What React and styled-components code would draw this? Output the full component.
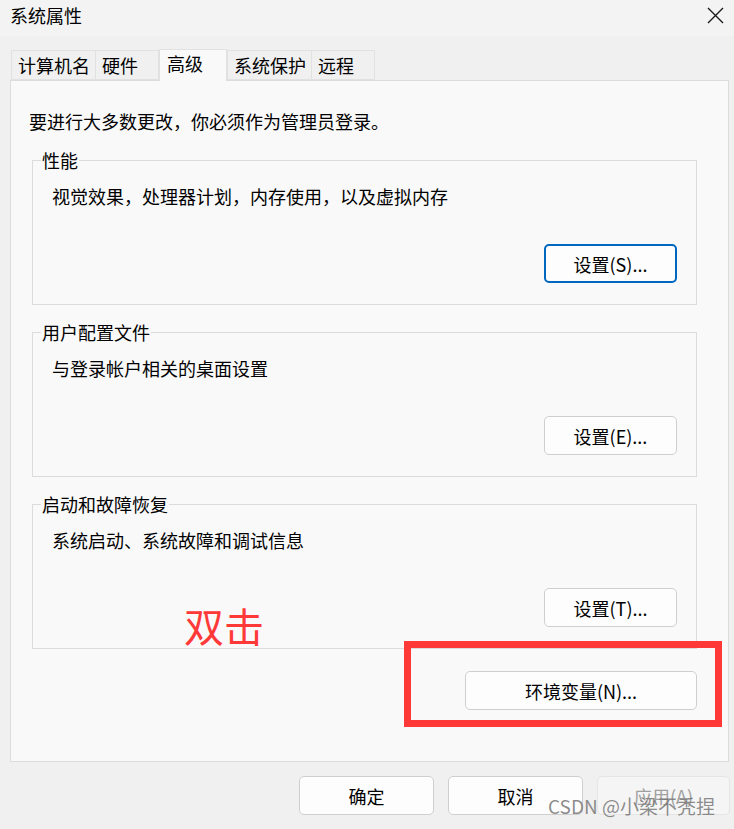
import React from 'react';
import styled, { createGlobalStyle } from 'styled-components';

const GlobalStyle = createGlobalStyle`
  html, body {
    margin: 0;
    padding: 0;
    background: #f0f0f0;
  }
  * {
    box-sizing: border-box;
  }
`;

const FONT = `"Microsoft YaHei UI", "Noto Sans CJK SC", "Noto Sans", sans-serif`;

const Window = styled.div`
  position: relative;
  width: 734px;
  height: 829px;
  display: flex;
  flex-direction: column;
  background: #f0f0f0;
  font-family: ${FONT};
  font-size: 18px;
  color: #000;
  overflow: hidden;
`;

const TitleBar = styled.div`
  height: 36px;
  display: flex;
  align-items: flex-start;
  justify-content: space-between;
  padding: 3px 8px 0 10px;
  background: #f3f3f3;
  font-size: 18px;
  line-height: 24px;
`;

const CloseButton = styled.div`
  width: 22px;
  height: 22px;
  display: flex;
  align-items: center;
  justify-content: center;
  margin-top: 1px;
`;

const TabRow = styled.div`
  display: flex;
  align-items: flex-end;
  height: 31px;
  margin: 13px 0 0 11px;
`;

const Tab = styled.div`
  height: ${(p) => (p.$active ? 32 : 30)}px;
  min-width: ${(p) => (p.$active ? 68 : 64)}px;
  padding: ${(p) => (p.$active ? '4px 6px 0 7px' : '0 5px 0 6px')};
  margin-bottom: ${(p) => (p.$active ? -1 : 0)}px;
  margin-left: ${(p) => (p.$active ? 1 : 0)}px;
  margin-right: ${(p) => (p.$active ? 0 : -1)}px;
  display: flex;
  align-items: ${(p) => (p.$active ? 'flex-start' : 'center')};
  background: ${(p) => (p.$active ? '#f9f9f9' : '#f0f0f0')};
  border: 1px solid #e1e1e1;
  border-bottom: ${(p) => (p.$active ? 'none' : '1px solid #e1e1e1')};
  position: relative;
  z-index: ${(p) => (p.$active ? 2 : 1)};
  line-height: 1;
`;

const Panel = styled.div`
  position: relative;
  height: 682px;
  margin: 0 5px 0 10px;
  background: #f9f9f9;
  border: 1px solid #dcdcdc;
  display: flex;
  flex-direction: column;
  padding: 28px 31px 0 21px;
`;

const Notice = styled.div`
  margin-left: -3px;
  line-height: 24px;
`;

const Groups = styled.div`
  display: flex;
  flex-direction: column;
  gap: 16px;
  margin-top: 16px;
`;

const Group = styled.fieldset`
  margin: 0;
  padding: 0 19px 20px 19px;
  height: 156px;
  border: 1px solid #dcdcdc;
  min-width: 0;
`;

const Legend = styled.legend`
  padding: 0 1px;
  margin-left: -11px;
  line-height: 22px;
  font-size: 18px;
`;

const Description = styled.div`
  margin-top: 13px;
  line-height: 24px;
`;

const GroupFooter = styled.div`
  margin-top: 36px;
  display: flex;
  justify-content: flex-end;
`;

const Button = styled.button`
  width: ${(p) => p.$width || 133}px;
  height: 39px;
  font-family: ${FONT};
  font-size: 18px;
  color: ${(p) => (p.disabled ? '#a0a0a0' : '#000')};
  background: ${(p) => (p.disabled ? '#f5f5f5' : '#fdfdfd')};
  border: ${(p) =>
    p.$focused ? '2px solid #0067c0' : p.disabled ? '1px solid #e5e5e5' : '1px solid #cfcfcf'};
  border-radius: 5px;
  padding: 0;
  cursor: default;
`;

const EnvRow = styled.div`
  display: flex;
  justify-content: flex-end;
  margin-top: 22px;
`;

const Footer = styled.div`
  display: flex;
  justify-content: flex-end;
  gap: 14px;
  padding: 14px 4px 0 0;
`;

const RedBox = styled.div`
  position: absolute;
  left: 404px;
  top: 641px;
  width: 318px;
  height: 86px;
  border: 7px solid #ff3838;
  pointer-events: none;
`;

const Annotation = styled.div`
  position: absolute;
  left: 184px;
  top: 600px;
  font-size: 40px;
  line-height: 50px;
  color: #ff3838;
  font-family: "Noto Sans CJK SC", sans-serif;
`;

const Watermark = styled.div`
  position: absolute;
  left: 548px;
  top: 795px;
  font-size: 19px;
  line-height: 22px;
  color: rgba(120, 120, 120, 0.85);
  font-family: "Noto Sans CJK SC", sans-serif;
  pointer-events: none;
  white-space: nowrap;
`;

const tabs = ['计算机名', '硬件', '高级', '系统保护', '远程'];

const groups = [
  { title: '性能', desc: '视觉效果，处理器计划，内存使用，以及虚拟内存', btn: '设置(S)...', focused: true },
  { title: '用户配置文件', desc: '与登录帐户相关的桌面设置', btn: '设置(E)...' },
  { title: '启动和故障恢复', desc: '系统启动、系统故障和调试信息', btn: '设置(T)...' },
];

const App = () => {
  return (
    <Window>
      <GlobalStyle />
      <TitleBar>
        <span>系统属性</span>
        <CloseButton>
          <svg width="17" height="17" viewBox="0 0 17 17">
            <path d="M1 1 L16 16 M16 1 L1 16" stroke="#1a1a1a" strokeWidth="1.4" />
          </svg>
        </CloseButton>
      </TitleBar>
      <TabRow>
        {tabs.map((t) => (
          <Tab key={t} $active={t === '高级'}>
            {t}
          </Tab>
        ))}
      </TabRow>
      <Panel>
        <Notice>要进行大多数更改，你必须作为管理员登录。</Notice>
        <Groups>
          {groups.map((g) => (
            <Group key={g.title}>
              <Legend>{g.title}</Legend>
              <Description>{g.desc}</Description>
              <GroupFooter>
                <Button $focused={g.focused}>{g.btn}</Button>
              </GroupFooter>
            </Group>
          ))}
        </Groups>
        <EnvRow>
          <Button $width={232}>环境变量(N)...</Button>
        </EnvRow>
      </Panel>
      <Footer>
        <Button $width={135}>确定</Button>
        <Button $width={135}>取消</Button>
        <Button $width={133} disabled>
          应用(A)
        </Button>
      </Footer>
      <Annotation>双击</Annotation>
      <RedBox />
      <Watermark>CSDN @小梁不秃捏</Watermark>
    </Window>
  );
};

export default App;
